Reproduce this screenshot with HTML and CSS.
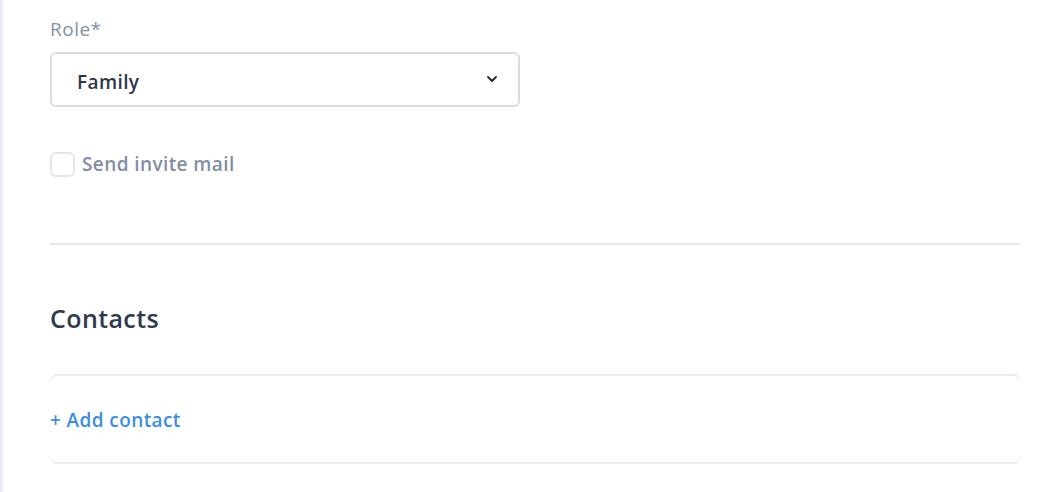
FILE: index.html
```html
<!DOCTYPE html>
<html lang="en">
<head>
<meta charset="utf-8">
<title>Member form</title>
<link rel="stylesheet" href="styles.css">
</head>
<body>
<div class="page">
  <div class="field">
    <div class="label">Role*</div>
    <div class="select">
      <span class="select-value">Family</span>
      <svg class="chevron" width="12" height="8" viewBox="0 0 12 8"><path d="M2 2 L6 6 L10 2" fill="none" stroke="#1f2633" stroke-width="1.8" stroke-linecap="round" stroke-linejoin="round"/></svg>
    </div>
  </div>
  <label class="check-row">
    <span class="checkbox"></span>
    <span class="check-label">Send invite mail</span>
  </label>
  <div class="divider"></div>
  <h2 class="section-title">Contacts</h2>
  <div class="card">
    <a class="add-link" href="#">+ Add contact</a>
  </div>
</div>
</body>
</html>
```

FILE: styles.css
```css
html, body {
  margin: 0;
  padding: 0;
  background: #ffffff;
}
body {
  font-family: "Open Sans", "Noto Sans", sans-serif;
  height: 492px;
  overflow: hidden;
}
.page {
  border-left: 3px solid #e9edf2;
  padding: 17px 37px 0 47px;
  min-height: 492px;
  box-sizing: border-box;
}
.label {
  font-size: 19px;
  line-height: 24px;
  letter-spacing: 0.5px;
  color: #8591a5;
  font-weight: 500;
}
.select {
  margin-top: 11px;
  width: 470px;
  height: 55px;
  box-sizing: border-box;
  border: 2px solid #dcdcdc;
  border-radius: 6px;
  display: flex;
  align-items: center;
  justify-content: space-between;
  padding: 5px 20px 0 25px;
}
.select-value {
  font-size: 19px;
  letter-spacing: 0.4px;
  font-weight: 600;
  color: #2d3748;
}
.chevron {
  margin-top: -7px;
}
.check-row {
  display: flex;
  align-items: center;
  margin-top: 44px;
  gap: 7px;
}
.checkbox {
  width: 25px;
  height: 25px;
  box-sizing: border-box;
  border: 2px solid #e3e5e9;
  border-radius: 6px;
}
.check-label {
  font-size: 19px;
  letter-spacing: 0.4px;
  font-weight: 600;
  color: #818ea2;
}
.divider {
  margin-top: 66px;
  height: 2px;
  background: #e7e8ec;
}
.section-title {
  margin: 57px 0 0;
  font-size: 25px;
  letter-spacing: 0.4px;
  line-height: 32px;
  font-weight: 600;
  color: #2f3a4c;
}
.card {
  margin-top: 40px;
  height: 90px;
  box-sizing: border-box;
  border-top: 2px solid #ebebf0;
  border-bottom: 2px solid #ebebf0;
  border-radius: 8px;
  display: flex;
  align-items: center;
  padding-top: 1px;
}
.add-link {
  font-size: 19px;
  letter-spacing: 0.4px;
  font-weight: 600;
  color: #3d8de2;
  text-decoration: none;
}
```
